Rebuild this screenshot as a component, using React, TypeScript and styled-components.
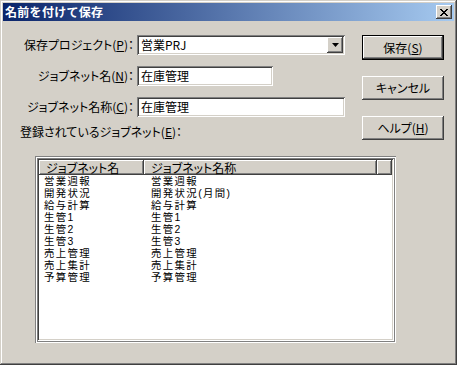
import React from "react";
import styled, { createGlobalStyle, css } from "styled-components";

const GlobalStyle = createGlobalStyle`
  html, body { margin: 0; padding: 0; background: #d4d0c8; }
  body { font-family: "Noto Sans CJK JP", "Noto Sans", sans-serif; font-size: 12px; color: #000; }
  * { box-sizing: border-box; }
`;

const raised = css`
  box-shadow: inset -1px -1px #404040, inset 1px 1px #ffffff,
    inset -2px -2px #808080, inset 2px 2px #d4d0c8;
`;

const sunken = css`
  box-shadow: inset 1px 1px #808080, inset -1px -1px #ffffff,
    inset 2px 2px #404040, inset -2px -2px #d4d0c8;
`;

const Window = styled.div`
  width: 457px;
  height: 365px;
  padding: 3px;
  display: flex;
  flex-direction: column;
  background: #d4d0c8;
  box-shadow: inset -1px -1px #404040, inset 1px 1px #d4d0c8,
    inset -2px -2px #808080, inset 2px 2px #ffffff;
`;

const TitleBar = styled.div`
  height: 18px;
  display: flex;
  align-items: center;
  justify-content: space-between;
  padding: 0 2px 0 2px;
  background: linear-gradient(90deg, #0a246a, #a6caf0);
`;

const Title = styled.span`
  color: #fff;
  font-weight: bold;
  font-size: 12px;
  line-height: 18px;
  letter-spacing: 0.3px;
`;

const CloseButton = styled.div`
  width: 16px;
  height: 14px;
  display: flex;
  align-items: center;
  justify-content: center;
  background: #d4d0c8;
  ${raised}
`;

const Content = styled.div`
  padding: 14px 0 0 14px;
  display: flex;
  flex-direction: column;
`;

const TopArea = styled.div`
  display: flex;
  gap: 17px;
`;

const Form = styled.div`
  width: 328px;
  display: flex;
  flex-direction: column;
`;

const FieldGrid = styled.div`
  display: grid;
  grid-template-columns: 117px auto;
  column-gap: 3px;
  row-gap: 11px;
  align-items: center;
`;

const Label = styled.label`
  text-align: right;
  white-space: nowrap;
  line-height: 20px;
  font-feature-settings: "palt";
`;

const Key = styled.span`
  text-decoration: underline;
`;

const Field = styled.div<{ $w: number }>`
  width: ${(p) => p.$w}px;
  height: 20px;
  background: #fff;
  display: flex;
  align-items: center;
  padding: 2px 2px 2px 4px;
  line-height: 16px;
  ${sunken}
`;

const FieldText = styled.span`
  flex: 1;
  white-space: nowrap;
`;

const DropButton = styled.div`
  width: 16px;
  height: 16px;
  background: #d4d0c8;
  display: flex;
  align-items: center;
  justify-content: center;
  ${raised}
`;

const ListLabel = styled.div`
  margin-top: 8px;
  padding-left: 3px;
  line-height: 14px;
  white-space: nowrap;
  font-feature-settings: "palt";
`;

const Buttons = styled.div`
  display: flex;
  flex-direction: column;
  gap: 16px;
`;

const Button = styled.div<{ $default?: boolean }>`
  width: 82px;
  height: 24px;
  display: flex;
  align-items: center;
  justify-content: center;
  background: #d4d0c8;
  line-height: 14px;
  font-feature-settings: "palt";
  ${raised}
  ${(p) =>
    p.$default &&
    css`
      border: 1px solid #000;
      height: 25px;
    `}
`;

const ListFrame = styled.div`
  margin: 16px 0 0 18px;
  width: 361px;
  height: 187px;
  padding: 4px;
  box-shadow: inset 1px 1px #808080, inset -1px -1px #ffffff,
    inset 2px 2px #ffffff, inset -2px -2px #808080,
    inset 3px 3px #808080, inset -3px -3px #ffffff,
    inset 4px 4px #404040, inset -4px -4px #d4d0c8;
  background: #fff;
  display: flex;
  flex-direction: column;
`;

const Header = styled.div`
  display: flex;
  height: 15px;
`;

const HeaderCell = styled.div<{ $w?: number }>`
  ${(p) => (p.$w ? `width: ${p.$w}px;` : "flex: 1;")}
  height: 15px;
  background: #d4d0c8;
  padding-left: 7px;
  line-height: 15px;
  white-space: nowrap;
  font-feature-settings: "palt";
  overflow: hidden;
  ${raised}
`;

const Rows = styled.div`
  padding-top: 1px;
`;

const Row = styled.div`
  display: flex;
  height: 12px;
`;

const Cell = styled.div<{ $w: number; $pad: number }>`
  width: ${(p) => p.$w}px;
  padding-left: ${(p) => p.$pad}px;
  font-family: "Liberation Sans", "Noto Sans CJK JP", sans-serif;
  font-size: 10.4px;
  letter-spacing: 1.4px;
  line-height: 12px;
  height: 12px;
  white-space: nowrap;
`;

const rows: [string, string][] = [
  ["営業週報", "営業週報"],
  ["開発状況", "開発状況(月間)"],
  ["給与計算", "給与計算"],
  ["生管1", "生管1"],
  ["生管2", "生管2"],
  ["生管3", "生管3"],
  ["売上管理", "売上管理"],
  ["売上集計", "売上集計"],
  ["予算管理", "予算管理"],
];

export default function App() {
  return (
    <>
      <GlobalStyle />
      <Window>
        <TitleBar>
          <Title>名前を付けて保存</Title>
          <CloseButton>
            <svg width="8" height="7" viewBox="0 0 8 7">
              <path
                d="M0 0h2v1h-2zM6 0h2v1h-2zM1 1h2v1h-2zM5 1h2v1h-2zM2 2h4v1h-4zM3 3h2v1h-2zM2 4h4v1h-4zM1 5h2v1h-2zM5 5h2v1h-2zM0 6h2v1h-2zM6 6h2v1h-2z"
                fill="#000"
              />
            </svg>
          </CloseButton>
        </TitleBar>
        <Content>
          <TopArea>
            <Form>
              <FieldGrid>
                <Label>
                  保存プロジェクト(<Key>P</Key>)：
                </Label>
                <Field $w={208}>
                  <FieldText>営業PRJ</FieldText>
                  <DropButton>
                    <svg width="7" height="4" viewBox="0 0 7 4">
                      <path d="M0 0h7L3.5 4z" fill="#000" />
                    </svg>
                  </DropButton>
                </Field>
                <Label>
                  ジョブネット名(<Key>N</Key>)：
                </Label>
                <Field $w={136}>
                  <FieldText>在庫管理</FieldText>
                </Field>
                <Label>
                  ジョブネット名称(<Key>C</Key>)：
                </Label>
                <Field $w={208}>
                  <FieldText>在庫管理</FieldText>
                </Field>
              </FieldGrid>
              <ListLabel>
                登録されているジョブネット(<Key>E</Key>)：
              </ListLabel>
            </Form>
            <Buttons>
              <Button $default>
                保存(<Key>S</Key>)
              </Button>
              <Button>キャンセル</Button>
              <Button>
                ヘルプ(<Key>H</Key>)
              </Button>
            </Buttons>
          </TopArea>
          <ListFrame>
            <Header>
              <HeaderCell $w={105}>ジョブネット名</HeaderCell>
              <HeaderCell $w={233}>ジョブネット名称</HeaderCell>
              <HeaderCell />
            </Header>
            <Rows>
              {rows.map(([a, b]) => (
                <Row key={a}>
                  <Cell $w={105} $pad={5}>
                    {a}
                  </Cell>
                  <Cell $w={233} $pad={7}>
                    {b}
                  </Cell>
                </Row>
              ))}
            </Rows>
          </ListFrame>
        </Content>
      </Window>
    </>
  );
}
